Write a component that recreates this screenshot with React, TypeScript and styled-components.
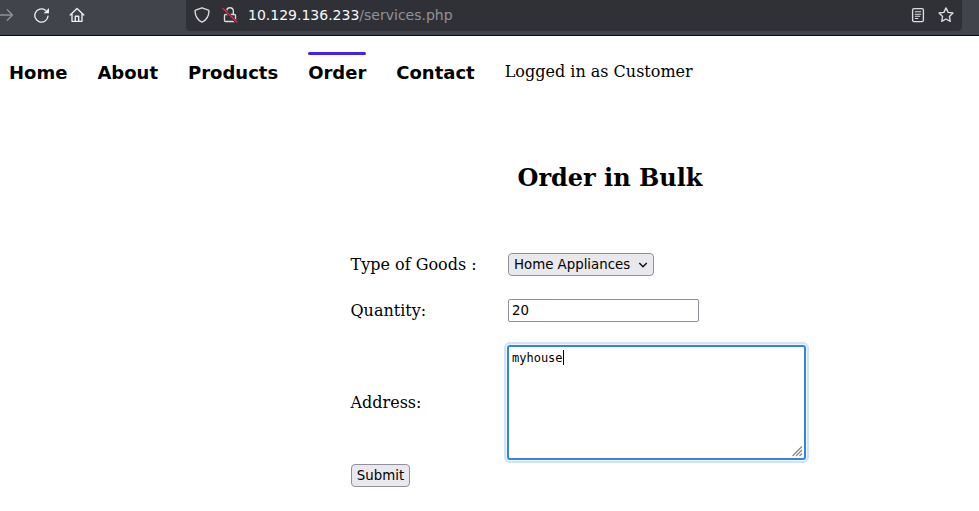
import React from "react";
import styled, { createGlobalStyle } from "styled-components";

const GlobalStyle = createGlobalStyle`
  *, *::before, *::after { box-sizing: border-box; }
  body {
    margin: 0;
    background: #fff;
    color: #000;
    font: 16px "DejaVu Serif", serif;
    overflow: hidden;
  }
`;

const Toolbar = styled.header`
  display: flex;
  align-items: flex-start;
  height: 36px;
  background: #42444c;
  border-bottom: 1px solid #0c0c0d;
`;

const NavButtons = styled.div`
  display: flex;
  align-items: center;
  gap: 20px;
  width: 186px;
  height: 30px;
  margin-left: -3px;
  color: #eeeef0;
`;

const Icon = styled.svg<{ $dim?: boolean }>`
  display: block;
  flex: none;
  width: 16px;
  height: 16px;
  fill: none;
  stroke: currentColor;
  stroke-width: 1.35;
  stroke-linecap: round;
  stroke-linejoin: round;
  opacity: ${(p) => (p.$dim ? 0.45 : 1)};
`;

const AddressBar = styled.div`
  display: flex;
  align-items: center;
  width: 776px;
  height: 31px;
  margin-left: 3px;
  padding: 0 8px 1px;
  border-radius: 0 0 4px 4px;
  background: #303136;
  color: #dcdcdf;
`;

const SiteIcons = styled.div`
  display: flex;
  gap: 12px;
`;

const Url = styled.div`
  flex: 1;
  margin-left: 10px;
  font: 14px/30px "DejaVu Sans", sans-serif;
  color: #f9f9fa;
`;

const UrlPath = styled.span`
  color: #929297;
`;

const PageIcons = styled(SiteIcons)``;

const Menu = styled.nav`
  display: flex;
  gap: 30px;
  height: 52px;
  padding: 16px 9px 0;
`;

const MenuLink = styled.a<{ $active?: boolean }>`
  font: bold 18px/35px "DejaVu Sans", sans-serif;
  color: #000;

  &::before {
    content: "";
    display: block;
    height: 3px;
    border-radius: 1.5px;
    background: ${(p) => (p.$active ? "#4321f5" : "transparent")};
  }
`;

const Session = styled.span`
  line-height: 39px;
`;

const Title = styled.h2`
  width: 520px;
  margin: 76px 0 0 350px;
  font-size: 24px;
  line-height: 28px;
  text-align: center;
`;

const OrderForm = styled.form`
  display: grid;
  grid-template-columns: 157px 299px;
  grid-template-rows: 23px 23px 115px;
  row-gap: 23px;
  align-items: center;
  justify-items: start;
  margin: 61px 0 0 350.5px;
`;

const Label = styled.label`
  line-height: 20px;
`;

const SelectBox = styled.div`
  display: grid;
  grid-template-columns: 1fr 16px;
  align-items: center;
  width: 146px;
  height: 23px;
  margin-left: 0.5px;
  border: 1px solid #8f8f9d;
  border-radius: 4px;
  background: #e9e9ed;
`;

const Select = styled.select`
  grid-area: 1 / 1 / 2 / 3;
  appearance: none;
  width: 100%;
  height: 21px;
  padding: 0 5px;
  border: 0;
  outline: 0;
  background: transparent;
  color: #000;
  font: 13.333px "DejaVu Sans", sans-serif;
`;

const Chevron = styled.svg`
  grid-area: 1 / 2;
  width: 10px;
  height: 6px;
  margin-left: 1px;
  fill: none;
  stroke: #111;
  stroke-width: 1.5;
  pointer-events: none;
`;

const TextInput = styled.input`
  width: 191px;
  height: 23px;
  margin-left: 0.5px;
  padding: 0 3px;
  border: 1px solid #8f8f9d;
  border-radius: 2px;
  outline: 0;
  font: 13.333px "DejaVu Sans", sans-serif;
`;

const AddressField = styled.div`
  display: flex;
  width: 299px;
  height: 115px;
  margin-left: -0.5px;
  padding: 4px 1px 1px 3px;
  border: 2px solid #3584e4;
  border-radius: 3px;
  box-shadow: 0 0 0 1px #f0f7ff, 0 0 0 3px #cce4ff;
  font: 12px/14px "DejaVu Sans Mono", monospace;
`;

const AddressText = styled.div`
  flex: 1;
  outline: 0;
`;

const Caret = styled.span`
  display: inline-block;
  width: 1px;
  height: 15px;
  margin: -1px 0 0;
  background: #000;
  vertical-align: top;
`;

const Grip = styled.svg`
  align-self: flex-end;
  width: 11px;
  height: 11px;
  stroke: #8a8a8a;
  stroke-width: 1.4;
`;

const Submit = styled.button`
  display: block;
  width: 59px;
  height: 23px;
  margin: 4px 0 0 351px;
  padding: 0;
  border: 1px solid #8f8f9d;
  border-radius: 4px;
  background: #e9e9ed;
  color: #000;
  font: 13.333px/20px "DejaVu Sans", sans-serif;
`;

const menuItems = ["Home", "About", "Products", "Order", "Contact"];

function BrowserToolbar() {
  return (
    <Toolbar>
      <NavButtons>
        <Icon $dim viewBox="0 0 16 16"><path d="M0 8h15M10.3 2.8 15.5 8l-5.2 5.2" /></Icon>
        <Icon viewBox="0 0 16 16">
          <path d="M12.4 3.2A6.6 6.6 0 1 0 15 9.2" />
          <path d="M16 1v5.2h-5.4z" fill="currentColor" stroke="none" />
        </Icon>
        <Icon viewBox="0 0 16 16"><path d="m1.2 8 6.8-6.6L14.8 8M3 6.6v7.7h10V6.6M6.3 14V9.2h3.4V14" /></Icon>
      </NavButtons>
      <AddressBar>
        <SiteIcons>
          <Icon viewBox="0 0 16 16"><path d="M8 .8 1.6 3.1c-.5.2-.7.5-.6 1 .3 5 2 8.8 7 11.1 5-2.3 6.7-6.1 7-11.1.1-.5-.1-.8-.6-1z" /></Icon>
          <Icon viewBox="0 0 16 16">
            <path d="M4.7 7V4a3.3 3.3 0 0 1 6.6 0v3M3.6 7.5h8.8c.7 0 1.1.4 1.1 1.1v4.8c0 .7-.4 1.1-1.1 1.1H3.6c-.7 0-1.1-.4-1.1-1.1V8.6c0-.7.4-1.1 1.1-1.1z" />
            <path d="m1 1.5 14 14" stroke="#303136" strokeWidth="3" />
            <path d="m1 1.5 14 13.5" stroke="#e22850" strokeWidth="1.4" />
          </Icon>
        </SiteIcons>
        <Url>10.129.136.233<UrlPath>/services.php</UrlPath></Url>
        <PageIcons>
          <Icon viewBox="0 0 16 16"><rect x="2.6" y="1.6" width="10.8" height="13" rx="1.4" /><path d="M5.3 4.7h5.4M5.3 7.2h5.4M5.3 9.3h4.4M5.3 11.5h2.5" strokeWidth="1.1" /></Icon>
          <Icon viewBox="0 0 16 16"><path d="m8 .9 2.1 4.5 4.9.6-3.6 3.4.9 5L8 12l-4.3 2.4.9-5L1 6l4.9-.6z" /></Icon>
        </PageIcons>
      </AddressBar>
    </Toolbar>
  );
}

export default function App() {
  return (
    <>
      <GlobalStyle />
      <BrowserToolbar />
      <Menu>
        {menuItems.map((item) => (
          <MenuLink key={item} $active={item === "Order"}>{item}</MenuLink>
        ))}
        <Session>Logged in as Customer</Session>
      </Menu>
      <main>
        <Title>Order in Bulk</Title>
        <OrderForm id="order" onSubmit={(e) => e.preventDefault()}>
          <Label htmlFor="goods">Type of Goods :</Label>
          <SelectBox>
            <Select id="goods"><option>Home Appliances</option></Select>
            <Chevron viewBox="0 0 10 6"><path d="m1.3 1 3.7 3.7L8.7 1" /></Chevron>
          </SelectBox>
          <Label htmlFor="quantity">Quantity:</Label>
          <TextInput id="quantity" defaultValue="20" />
          <Label>Address:</Label>
          <AddressField>
            <AddressText role="textbox" aria-label="Address">myhouse<Caret /></AddressText>
            <Grip viewBox="0 0 11 11"><path d="M.5 10 10 .5M4 10l6-6M7.5 10 10 7.5" /></Grip>
          </AddressField>
        </OrderForm>
        <Submit form="order">Submit</Submit>
      </main>
    </>
  );
}
